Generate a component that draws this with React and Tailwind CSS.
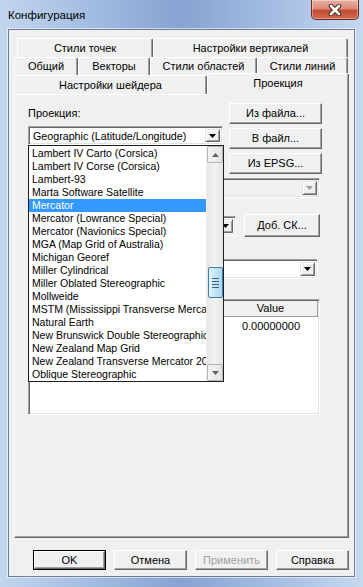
import React from "react";

const items = [
  "Lambert IV Carto (Corsica)",
  "Lambert IV Corse (Corsica)",
  "Lambert-93",
  "Marta Software Satellite",
  "Mercator",
  "Mercator (Lowrance Special)",
  "Mercator (Navionics Special)",
  "MGA (Map Grid of Australia)",
  "Michigan Georef",
  "Miller Cylindrical",
  "Miller Oblated Stereographic",
  "Mollweide",
  "MSTM (Mississippi Transverse Mercator)",
  "Natural Earth",
  "New Brunswick Double Stereographic",
  "New Zealand Map Grid",
  "New Zealand Transverse Mercator 2000",
  "Oblique Stereographic",
];

function Btn({ children, className = "", disabled = false }) {
  return (
    <div
      className={`flex items-center justify-center bg-[#f0f0f0] border border-t-white border-l-white border-r-[#696969] border-b-[#696969] shadow-[inset_-1px_-1px_0_#a0a0a0] text-[11px] leading-none ${
        disabled ? "text-[#a0a0a0]" : "text-black"
      } ${className}`}
    >
      {children}
    </div>
  );
}

function ArrowBtn({ disabled = false }) {
  return (
    <div className="w-[15px] h-full flex items-center justify-center bg-[#f0f0f0] border border-t-[#e3e3e3] border-l-[#e3e3e3] border-r-[#696969] border-b-[#696969] shadow-[inset_1px_1px_0_white,inset_-1px_-1px_0_#a0a0a0]">
      <svg width="7" height="4" viewBox="0 0 7 4">
        <path d="M0 0 H7 L3.5 4 Z" fill={disabled ? "#a0a0a0" : "#000"} />
      </svg>
    </div>
  );
}

function Combo({ className = "", text = "", disabled = false, children }) {
  return (
    <div
      className={`relative flex border border-t-[#a0a0a0] border-l-[#a0a0a0] border-r-white border-b-white shadow-[inset_1px_1px_0_#696969,inset_-1px_-1px_0_#e3e3e3] p-[2px] ${
        disabled ? "bg-[#f0f0f0]" : "bg-white"
      } ${className}`}
    >
      <div className="flex-1 pl-[2px] text-[10.7px] leading-[14px] whitespace-nowrap overflow-hidden flex items-center">
        {text}
      </div>
      <ArrowBtn disabled={disabled} />
      {children}
    </div>
  );
}

function Tab({ label, className = "" }) {
  return (
    <div
      className={`flex items-center justify-center bg-[#f0f0f0] border-t border-l border-r border-t-white border-l-white border-r-[#696969] shadow-[inset_-1px_0_0_#a0a0a0] rounded-t-[2px] text-[11px] leading-none whitespace-nowrap ${className}`}
    >
      {label}
    </div>
  );
}

function ScrollArrow({ up }) {
  return (
    <div className="w-[16px] h-[17px] flex items-center justify-center bg-[linear-gradient(90deg,#f4f4f4,#e4e4e4)] border border-[#b5b5b5] rounded-[2px]">
      <svg width="7" height="4" viewBox="0 0 7 4">
        {up ? (
          <path d="M0 4 H7 L3.5 0 Z" fill="#606060" />
        ) : (
          <path d="M0 0 H7 L3.5 4 Z" fill="#606060" />
        )}
      </svg>
    </div>
  );
}

export default function App() {
  return (
    <div className="w-[363px] h-[587px] overflow-hidden flex flex-col text-black font-['Liberation_Sans',Arial,sans-serif] bg-[linear-gradient(90deg,#c3d6ee_0%,#a3bce2_25%,#88a3d2_50%,#a8c0e4_78%,#c6d8ef_100%)]">
      {/* title bar */}
      <div className="h-[29px] shrink-0 flex items-start">
        <div className="pl-[8px] pt-[8px] text-[11.5px] leading-[14px]">Конфигурация</div>
        <div className="ml-auto mr-[4px] w-[48px] h-[20px] rounded-b-[5px] border border-t-0 border-[#6a2a22] bg-[linear-gradient(180deg,#eab0a2_0%,#da8c79_45%,#c44a33_55%,#d06a4f_100%)] shadow-[inset_0_0_0_1px_rgba(255,255,255,0.35)] flex items-center justify-center">
          <svg width="14" height="12" viewBox="0 0 14 12">
            <path d="M3 2 L11 10 M11 2 L3 10" stroke="#4a2a26" strokeWidth="4.6" strokeLinecap="round" />
            <path d="M3 2 L11 10 M11 2 L3 10" stroke="#ffffff" strokeWidth="2.6" strokeLinecap="round" />
          </svg>
        </div>
      </div>

      {/* client */}
      <div className="mx-[8px] h-[548px] shrink-0 border border-[#6e7e96] shadow-[0_0_0_1px_rgba(255,255,255,0.55)] bg-[#f0f0f0] flex flex-col pl-[5px] pt-[8px]">
        {/* tabs */}
        <div className="w-[335px] flex flex-col">
          <div className="flex pl-[3px] h-[19px]">
            <Tab label="Стили точек" className="w-[136px]" />
            <Tab label="Настройки вертикалей" className="w-[195px]" />
          </div>
          <div className="flex h-[18px]">
            <Tab label="Общий" className="w-[64px]" />
            <Tab label="Векторы" className="w-[72px]" />
            <Tab label="Стили областей" className="w-[107px]" />
            <Tab label="Стили линий" className="w-[91px]" />
          </div>
          <div className="flex h-[19px] items-end">
            <Tab label="Настройки шейдера" className="w-[193px] h-[19px] pt-[1px]" />
            <Tab label="Проекция" className="w-[142px] h-[22px] -mb-[1px] relative z-10 pb-[3px]" />
          </div>
          {/* panel */}
          <div className="h-[444px] border border-t-white border-l-white border-r-[#696969] border-b-[#696969] shadow-[inset_-1px_-1px_0_#a0a0a0] pl-[13px] pt-[8px] flex flex-col">
            <div className="flex gap-[6px]">
              <div className="w-[195px] flex flex-col">
                <div className="h-[20px] flex items-center text-[11px]">Проекция:</div>
                <Combo className="mt-[3px] h-[19px]" text="Geographic (Latitude/Longitude)">
                  <div className="absolute left-[-1px] top-[18px] z-20 w-[196px] h-[237px] border border-[#1e1e1e] bg-white flex">
                    <div className="flex-1 pt-[1px] overflow-hidden">
                      {items.map((t, i) => (
                        <div
                          key={t}
                          className={`h-[13px] leading-[13px] pl-[3px] text-[10.5px] whitespace-nowrap ${
                            i === 4 ? "bg-[#3399ff] text-white" : "text-black"
                          }`}
                        >
                          {t}
                        </div>
                      ))}
                    </div>
                    <div className="w-[17px] flex flex-col items-center bg-[linear-gradient(90deg,#e6e6e6,#f2f2f2_50%,#e6e6e6)] border-l border-[#f0f0f0]">
                      <ScrollArrow up />
                      <div className="flex-1 w-full flex flex-col items-center">
                        <div className="mt-[104px] w-[15px] h-[31px] rounded-[2px] border border-[#3c7fb1] bg-[linear-gradient(90deg,#e5f4fc,#c4e5f6_50%,#a9d7f3)] flex flex-col items-center justify-center gap-[2px]">
                          <div className="w-[7px] h-[1px] bg-[#3c5f7e]" />
                          <div className="w-[7px] h-[1px] bg-[#3c5f7e]" />
                          <div className="w-[7px] h-[1px] bg-[#3c5f7e]" />
                          <div className="w-[7px] h-[1px] bg-[#3c5f7e]" />
                        </div>
                      </div>
                      <ScrollArrow />
                    </div>
                  </div>
                </Combo>
              </div>
              <div className="w-[93px] flex flex-col gap-[4px]">
                <Btn className="h-[21px]">Из файла...</Btn>
                <Btn className="h-[21px]">В файл...</Btn>
                <Btn className="h-[21px]">Из EPSG...</Btn>
              </div>
            </div>

            <Combo className="mt-[4px] w-[292px] h-[20px]" disabled text="" />

            <div className="mt-[16px] flex items-center h-[23px]">
              <Combo className="w-[208px] h-[20px]" text="" />
              <Btn className="ml-[8px] w-[76px] h-[23px]">Доб. СК...</Btn>
            </div>

            <Combo className="mt-[22px] w-[290px] h-[20px]" text="" />

            <div className="mt-[20px] w-[292px] h-[116px] border border-t-[#a0a0a0] border-l-[#a0a0a0] border-r-white border-b-white shadow-[inset_1px_1px_0_#696969,inset_-1px_-1px_0_#e3e3e3] bg-white p-[1px] flex flex-col">
              <div className="flex h-[16px] bg-[#f0f0f0]">
                <div className="w-[194px] border-r border-b border-[#a0a0a0]" />
                <div className="w-[94px] border-r border-b border-[#a0a0a0] text-[11px] flex items-center justify-center">Value</div>
              </div>
              <div className="flex h-[18px]">
                <div className="w-[194px]" />
                <div className="w-[94px] text-[11px] flex items-center justify-center">0.00000000</div>
              </div>
            </div>
          </div>
        </div>

        {/* bottom buttons */}
        <div className="mt-[12px] ml-[19px] flex gap-[8px]">
          <div className="w-[73px] h-[20px] border border-black flex">
            <Btn className="flex-1">OK</Btn>
          </div>
          <Btn className="w-[73px] h-[20px]">Отмена</Btn>
          <Btn className="w-[73px] h-[20px]" disabled>
            Применить
          </Btn>
          <Btn className="w-[73px] h-[20px]">Справка</Btn>
        </div>
      </div>
    </div>
  );
}
